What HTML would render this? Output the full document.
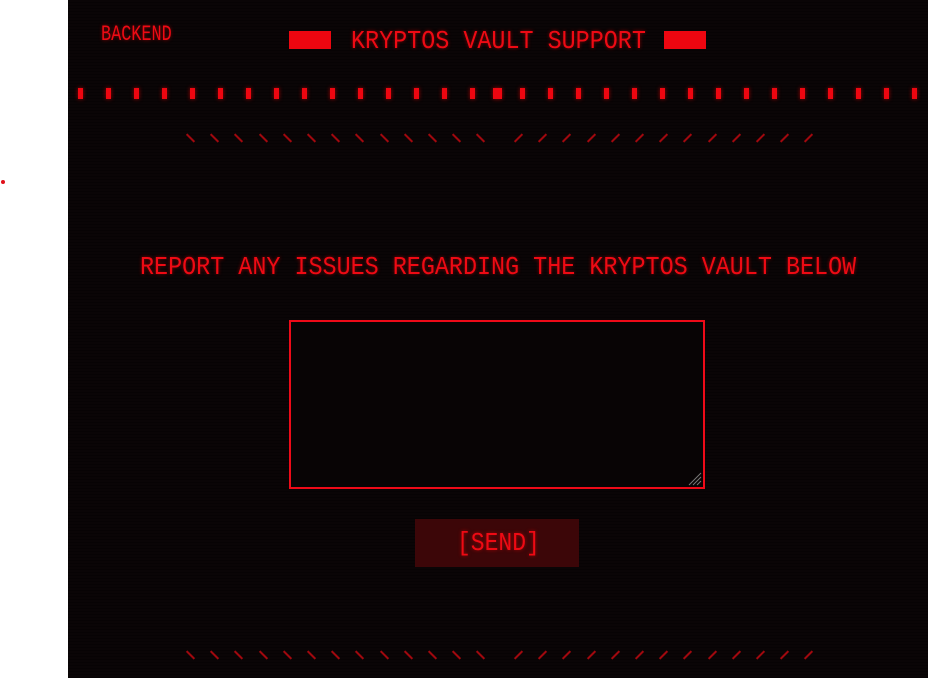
<!DOCTYPE html>
<html><head><meta charset="utf-8"><style>
html,body{margin:0;padding:0;width:928px;height:678px;overflow:hidden;background:#fff;}
#main{position:absolute;left:68px;top:0;width:860px;height:678px;background:#0a0506;
background-image:repeating-linear-gradient(0deg,rgba(0,0,0,0.35) 0 1px,transparent 1px 3px);}
.t{position:absolute;font-family:"Liberation Mono",monospace;color:#ee0a14;white-space:nowrap;transform-origin:0 0;text-shadow:0 0 4px rgba(255,0,0,0.5);line-height:1;}
.sq{position:absolute;background:#ee0610;}
.dot{position:absolute;top:88px;width:5px;height:11px;background:#ee0610;box-shadow:0 0 4px rgba(255,0,0,0.6);}
.sl{position:absolute;width:11px;height:2px;background:#a0080e;}
</style></head><body>
<div style="position:absolute;left:1px;top:180px;width:4px;height:4px;border-radius:2px;background:#e0101a"></div>
<div id="main"></div>
<div class="t" style="left:101px;top:24px;font-size:22px;transform:scaleX(0.765)">BACKEND</div>
<div class="sq" style="left:289px;top:31px;width:42px;height:18px"></div>
<div class="sq" style="left:664px;top:31px;width:42px;height:18px"></div>
<div class="t" style="left:351px;top:28px;font-size:26px;transform:scaleX(0.9)">KRYPTOS VAULT SUPPORT</div>
<div id="dots"></div>
<div id="sl"></div>
<div class="t" style="left:140px;top:254px;font-size:26px;transform:scaleX(0.9)">REPORT ANY ISSUES REGARDING THE KRYPTOS VAULT BELOW</div>
<div style="position:absolute;left:289px;top:320px;width:412px;height:165px;border:2px solid #ee0a18;background:#080405"></div>
<svg style="position:absolute;left:688px;top:472px" width="14" height="14"><path d="M13 1L1 13M13 5L5 13M13 9L9 13" stroke="#777" stroke-width="1"/></svg>
<div style="position:absolute;left:415px;top:519px;width:164px;height:48px;background:#3c0608"></div>
<div class="t" style="left:457px;top:530px;font-size:26px;transform:scaleX(0.885)">[SEND]</div>
<script>
var d='';
for(var i=0;i<15;i++){d+='<div class="dot" style="left:'+(78+28*i)+'px"></div>';}
d+='<div class="dot" style="left:493px;width:9px"></div>';
for(var i=0;i<15;i++){d+='<div class="dot" style="left:'+(520+28*i)+'px"></div>';}
document.getElementById('dots').innerHTML=d;
var s='';
[137,654].forEach(function(y){
for(var i=0;i<13;i++){s+='<div class="sl" style="left:'+(185+24.2*i)+'px;top:'+y+'px;transform:rotate(45deg)"></div>';}
for(var i=0;i<13;i++){s+='<div class="sl" style="left:'+(513+24.2*i)+'px;top:'+y+'px;transform:rotate(-45deg)"></div>';}
});
document.getElementById('sl').innerHTML=s;
</script>
</body></html>
